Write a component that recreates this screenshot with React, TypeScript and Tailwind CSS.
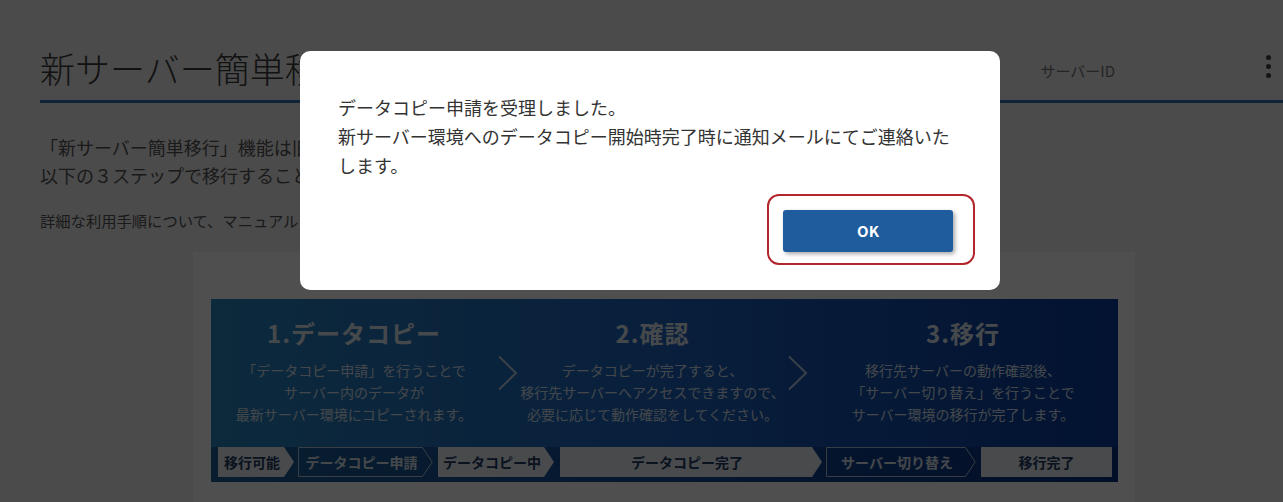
import React from "react";

const FONT = { fontFamily: '"Noto Sans CJK JP", "Noto Sans", sans-serif' };

type Step = { label: string; w: number; ml: number; kind: "fill" | "outline" | "rect" };

const steps: Step[] = [
  { label: "移行可能", w: 76, ml: 0, kind: "fill" },
  { label: "データコピー申請", w: 135, ml: 4, kind: "outline" },
  { label: "データコピー中", w: 116, ml: 5, kind: "fill" },
  { label: "データコピー完了", w: 262, ml: 6, kind: "fill" },
  { label: "サーバー切り替え", w: 150, ml: 4, kind: "outline" },
  { label: "移行完了", w: 131, ml: 5, kind: "rect" },
];

function StepBox({ s }: { s: Step }) {
  const h = 30;
  const p = 10;
  const w = s.w;
  const pts =
    s.kind === "rect"
      ? `0,0 ${w},0 ${w},${h} 0,${h}`
      : `0,0 ${w - p},0 ${w},${h / 2} ${w - p},${h} 0,${h}`;
  const ptsOutline = `0.5,0.5 ${w - p - 0.5},0.5 ${w - 0.8},${h / 2} ${w - p - 0.5},${h - 0.5} 0.5,${h - 0.5}`;
  return (
    <div
      className="relative flex h-[30px] shrink-0 items-center justify-center"
      style={{ width: w, marginLeft: s.ml }}
    >
      <svg className="absolute inset-0" width={w} height={h} viewBox={`0 0 ${w} ${h}`}>
        {s.kind === "outline" ? (
          <polygon points={ptsOutline} fill="none" stroke="rgba(230,238,246,0.75)" strokeWidth="1" />
        ) : (
          <polygon points={pts} fill="#e9eef5" />
        )}
      </svg>
      <span
        className={
          s.kind === "outline"
            ? "relative pr-[8px] text-[14px] font-bold leading-none text-[#dfe7f0]"
            : s.kind === "rect"
            ? "relative text-[14px] font-bold leading-none text-[#1d3b62]"
            : "relative pr-[8px] text-[14px] font-bold leading-none text-[#1d3b62]"
        }
      >
        {s.label}
      </span>
    </div>
  );
}

function Chevron() {
  return (
    <svg width="21" height="36" viewBox="0 0 21 36" className="shrink-0">
      <polyline points="2,1.5 19,18 2,34.5" fill="none" stroke="rgba(225,235,245,0.8)" strokeWidth="2" />
    </svg>
  );
}

function Column({ title, lines }: { title: string; lines: string[] }) {
  return (
    <div className="flex flex-col items-center">
      <div className="text-[24px] font-bold leading-[30px] tracking-[1px] text-[#e3ebf3]">{title}</div>
      <div className="mt-[11px] text-center text-[14px] leading-[22px] text-[#d9e3ee]">
        {lines.map((l) => (
          <div key={l}>{l}</div>
        ))}
      </div>
    </div>
  );
}

export default function App() {
  return (
    <div className="relative h-[502px] w-full overflow-hidden bg-[#f2f2f2]" style={FONT}>
      <div className="pl-[40px] pt-[47px]">
        {/* header */}
        <div className="flex items-start border-b-[3px] border-[#2d6db5] pb-[11px]">
          <h1 className="text-[35px] font-light leading-[42px] text-[#3a3a3a]">新サーバー簡単移行</h1>
          <div className="ml-auto mr-[143px] pt-[13px] text-[15px] leading-[22px] text-[#777]">サーバーID</div>
          <div className="mr-[5px] flex w-[20px] flex-col items-center gap-[4px] pt-[8px]">
            <span className="h-[5px] w-[5px] rounded-full bg-[#444]" />
            <span className="h-[5px] w-[5px] rounded-full bg-[#444]" />
            <span className="h-[5px] w-[5px] rounded-full bg-[#444]" />
          </div>
        </div>

        {/* body */}
        <p className="mt-[30px] text-[18px] leading-[28px] text-[#555]">
          「新サーバー簡単移行」機能は旧サーバー環境から新サーバー環境へ、
          <br />
          以下の３ステップで移行することができます。
        </p>
        <p className="mt-[20px] text-[15.3px] leading-[22px] text-[#555]">
          詳細な利用手順について、マニュアルをご確認ください。
        </p>

        {/* card */}
        <div className="ml-[153px] mt-[21px] h-[260px] w-[942px] bg-white pl-[18px] pr-[17px] pt-[47px]">
          <div className="flex h-[183px] flex-col bg-[linear-gradient(90deg,#2a86c0_0%,#1f68c4_45%,#0a3c9e_100%)]">
            <div className="flex items-start pt-[19px]">
              <div className="w-[286px] shrink-0">
                <Column
                  title="1.データコピー"
                  lines={["「データコピー申請」を行うことで", "サーバー内のデータが", "最新サーバー環境にコピーされます。"]}
                />
              </div>
              <div className="mt-[37px]">
                <Chevron />
              </div>
              <div className="w-[269px] shrink-0">
                <Column
                  title="2.確認"
                  lines={["データコピーが完了すると、", "移行先サーバーへアクセスできますので、", "必要に応じて動作確認をしてください。"]}
                />
              </div>
              <div className="mt-[37px]">
                <Chevron />
              </div>
              <div className="flex-1">
                <Column
                  title="3.移行"
                  lines={["移行先サーバーの動作確認後、", "「サーバー切り替え」を行うことで", "サーバー環境の移行が完了します。"]}
                />
              </div>
            </div>
            <div className="mt-[22px] flex h-[36px] items-start bg-[linear-gradient(90deg,rgba(0,20,70,0.35),rgba(0,10,50,0.25))] pl-[7px]">
              {steps.map((s) => (
                <StepBox key={s.label} s={s} />
              ))}
            </div>
          </div>
        </div>
      </div>

      {/* overlay */}
      <div className="absolute inset-0 bg-black/[0.69]" />

      {/* modal */}
      <div className="absolute left-[300px] top-[51px] w-[700px] rounded-[10px] bg-white px-[38px] pb-[25px] pt-[42px]">
        <p className="text-[18px] leading-[29px] text-[#333]">
          データコピー申請を受理しました。
          <br />
          新サーバー環境へのデータコピー開始時完了時に通知メールにてご連絡いたします。
        </p>
        <div className="mt-[14px] flex justify-end">
          <div className="-mr-[13px] rounded-[12px] border-2 border-[#b3262c] pb-[11px] pl-[14px] pr-[20px] pt-[14px]">
            <button className="flex h-[42px] w-[170px] items-center justify-center rounded-[3px] bg-[#1e5c9e] text-[15px] font-bold text-white shadow-[2px_2px_4px_rgba(0,0,0,0.35)]">
              OK
            </button>
          </div>
        </div>
      </div>
    </div>
  );
}
